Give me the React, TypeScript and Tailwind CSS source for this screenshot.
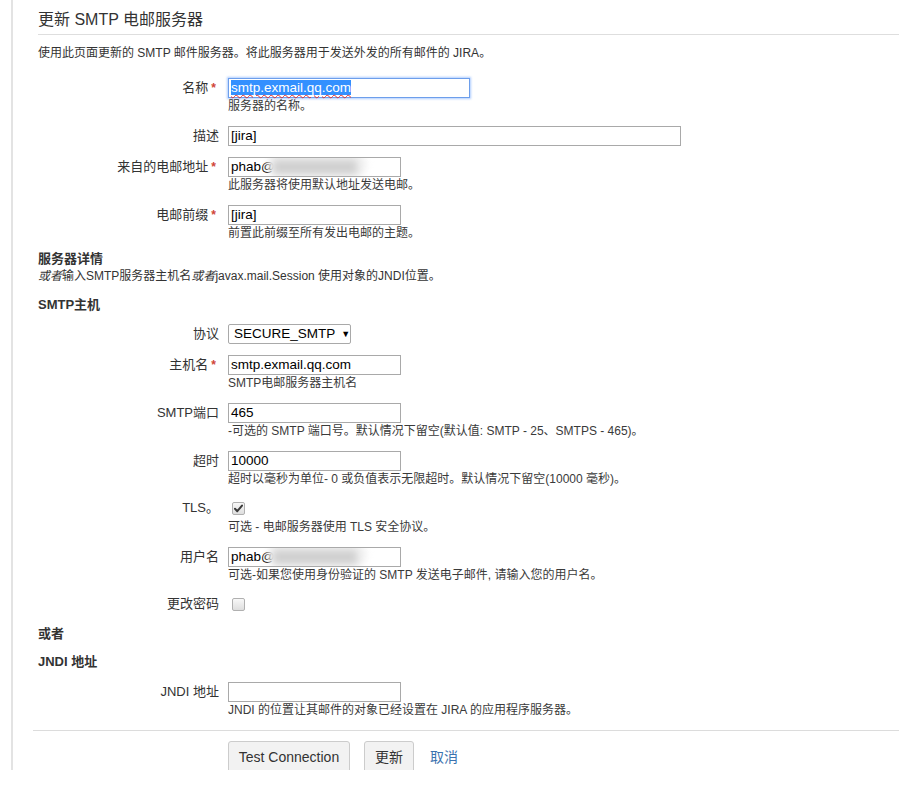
import React from "react";

const Req = () => <span className="text-[#d04437] ml-[3px] text-[12px] font-bold">*</span>;

function Label({ text, req }: { text: string; req?: boolean }) {
  return (
    <div className={"w-[186px] shrink-0 text-right text-[13px] leading-[20px] text-[#333] " + (req ? "pr-[3px]" : "")}>
      {text}
      {req && <Req />}
    </div>
  );
}

function TextBox({ value, w, blur }: { value: string; w: string; blur?: boolean }) {
  return (
    <div className={"relative h-[20px] border border-[#a9a9a9] bg-white px-[2px] text-[13.5px] leading-[18px] text-black overflow-hidden " + w}>
      {value}
      {blur && (
        <div className="absolute left-[38px] top-[-6px] h-[26px] w-[100px] rounded-full bg-[#f2f2f2] blur-[3px]">
          <div className="absolute left-[6px] top-[8px] h-[14px] w-[84px] bg-[#cfcfcf] blur-[2px]" />
        </div>
      )}
    </div>
  );
}

function Help({ text }: { text: string }) {
  return <div className="text-[12px] leading-[14px] text-[#3a3a3a]">{text}</div>;
}

function Row({ mt, label, req, children, help, helpMt }: { mt: string; label: string; req?: boolean; children: React.ReactNode; help?: string; helpMt?: string }) {
  return (
    <div className={"flex " + mt}>
      <Label text={label} req={req} />
      <div className="ml-[9px] flex flex-col">
        {children}
        {help && (
          <div className={helpMt || "mt-[1px]"}>
            <Help text={help} />
          </div>
        )}
      </div>
    </div>
  );
}

function CheckBox({ checked }: { checked?: boolean }) {
  return (
    <div className="h-[20px] flex items-center pl-[4px]">
      <div className="relative h-[13px] w-[13px] rounded-[2px] border border-[#b0b0b0] bg-gradient-to-b from-[#f8f8f8] to-[#dedede]">
        {checked && (
          <svg viewBox="0 0 13 13" className="absolute left-[-1px] top-[-1px] h-[13px] w-[13px]">
            <path d="M3 6.8 L5.3 9.2 L10 3.6" fill="none" stroke="#3a3a3a" strokeWidth="2" strokeLinecap="round" strokeLinejoin="round" />
          </svg>
        )}
      </div>
    </div>
  );
}

export default function App() {
  return (
    <div className="bg-white w-[899px] h-[797px] font-['Liberation_Sans','Noto_Sans_CJK_SC',sans-serif] text-[#333]">
      <div className="ml-[11px] h-[770px] border-l-2 border-[#e3e3e3] overflow-hidden pl-[20px]">
        <div className="pl-[5px]">
          <div className="pt-[10px] pb-[4px] border-b border-[#dedede] text-[16px] leading-[20px] text-[#333]">
            更新 SMTP 电邮服务器
          </div>
          <div className="mt-[9px] text-[12px] leading-[18px] text-[#333]">
            使用此页面更新的 SMTP 邮件服务器。将此服务器用于发送外发的所有邮件的 JIRA。
          </div>
        </div>

        <Row mt="mt-[16px]" label="名称" req help="服务器的名称。">
          <div className="h-[20px] w-[242px] border border-[#6d9eeb] shadow-[0_0_2px_1px_rgba(77,144,254,0.45)] bg-white px-[2px] text-[13.5px] leading-[18px]">
            <span className="bg-[#3390ff] text-white underline decoration-wavy decoration-[#e03030] decoration-1 underline-offset-2">smtp.exmail.qq.com</span>
          </div>
        </Row>

        <Row mt="mt-[13px]" label="描述">
          <TextBox value="[jira]" w="w-[453px]" />
        </Row>

        <Row mt="mt-[11px]" label="来自的电邮地址" req help="此服务器将使用默认地址发送电邮。">
          <TextBox value="phab@" w="w-[173px]" blur />
        </Row>

        <Row mt="mt-[13px]" label="电邮前缀" req help="前置此前缀至所有发出电邮的主题。">
          <TextBox value="[jira]" w="w-[173px]" />
        </Row>

        <div className="pl-[5px]">
          <div className="mt-[10px] text-[13px] leading-[18px] font-bold text-[#333]">服务器详情</div>
          <div className="text-[12px] leading-[16px] text-[#333]">
            <i>或者</i>输入SMTP服务器主机名<i>或者</i>javax.mail.Session 使用对象的JNDI位置。
          </div>
          <div className="mt-[12px] text-[13px] leading-[18px] font-bold text-[#333]">SMTP主机</div>
        </div>

        <Row mt="mt-[10px]" label="协议">
          <div className="h-[20px] w-[123px] border border-[#a9a9a9] rounded-[2px] bg-white flex items-center pl-[5px] text-[13.5px] leading-[18px] text-black">
            <span>SECURE_SMTP</span>
            <span className="ml-[6px] text-[9px]">▼</span>
          </div>
        </Row>

        <Row mt="mt-[11px]" label="主机名" req help="SMTP电邮服务器主机名">
          <TextBox value="smtp.exmail.qq.com" w="w-[173px]" />
        </Row>

        <Row mt="mt-[13px]" label="SMTP端口" help="-可选的 SMTP 端口号。默认情况下留空(默认值: SMTP - 25、SMTPS - 465)。" helpMt="mt-[1px]">
          <TextBox value="465" w="w-[173px]" />
        </Row>

        <Row mt="mt-[13px]" label="超时" help="超时以毫秒为单位- 0 或负值表示无限超时。默认情况下留空(10000 毫秒)。" helpMt="mt-[1px]">
          <TextBox value="10000" w="w-[173px]" />
        </Row>

        <Row mt="mt-[12px]" label="TLS。" help="可选 - 电邮服务器使用 TLS 安全协议。" helpMt="mt-[2px]">
          <CheckBox checked />
        </Row>

        <Row mt="mt-[13px]" label="用户名" help="可选-如果您使用身份验证的 SMTP 发送电子邮件, 请输入您的用户名。">
          <TextBox value="phab@" w="w-[173px]" blur />
        </Row>

        <Row mt="mt-[12px]" label="更改密码">
          <CheckBox />
        </Row>

        <div className="pl-[5px]">
          <div className="mt-[11px] text-[13px] leading-[18px] font-bold text-[#333]">或者</div>
          <div className="mt-[10px] text-[13px] leading-[18px] font-bold text-[#333]">JNDI 地址</div>
        </div>

        <Row mt="mt-[11px]" label="JNDI 地址" help="JNDI 的位置让其邮件的对象已经设置在 JIRA 的应用程序服务器。">
          <TextBox value="" w="w-[173px]" />
        </Row>

        <div className="mt-[13px] border-t border-[#dcdcdc]" />

        <div className="mt-[10px] flex items-start pl-[195px]">
          <button className="h-[32px] w-[122px] rounded-[3px] border border-[#cccccc] bg-[#f2f2f2] text-[14px] text-[#333]">
            Test Connection
          </button>
          <button className="ml-[14px] h-[32px] w-[50px] rounded-[3px] border border-[#cccccc] bg-[#f2f2f2] text-[14px] text-[#333]">
            更新
          </button>
          <a className="ml-[16px] leading-[32px] text-[14px] text-[#3b73af]">取消</a>
        </div>
      </div>
    </div>
  );
}
